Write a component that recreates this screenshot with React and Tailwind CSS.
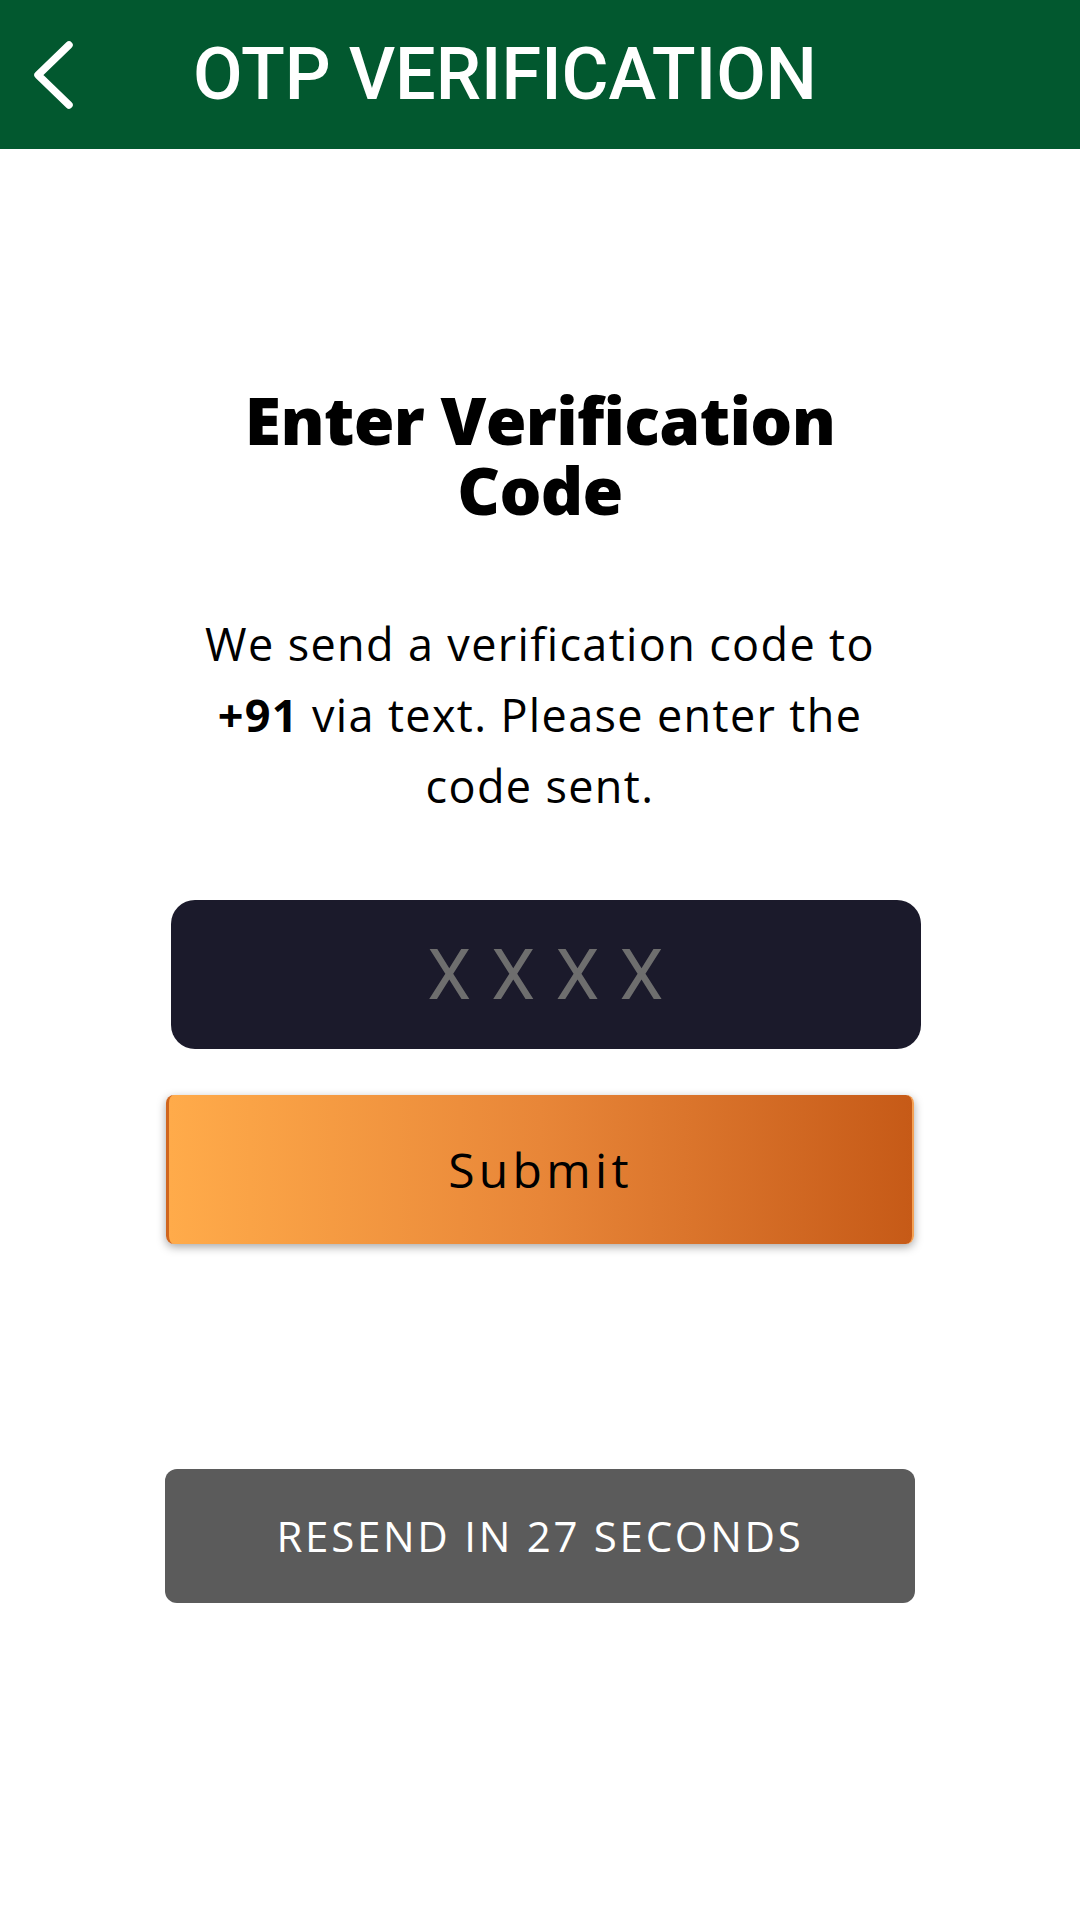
export default function App() {
  return (
    <div className="w-[1080px] h-[1920px] bg-white font-['Open_Sans',sans-serif]">
      {/* Header */}
      <header className="h-[149px] bg-[#02582F] flex items-center">
        <svg className="ml-[30px] w-[44px] h-[70px]" viewBox="0 0 44 70" fill="none">
          <polyline points="39,5 8,35 39,65" stroke="white" strokeWidth="7.5" strokeLinecap="round" strokeLinejoin="round" />
        </svg>
        <h1 className="ml-[119px] text-white font-['Roboto',sans-serif] font-medium text-[72px] leading-none">
          OTP VERIFICATION
        </h1>
      </header>

      <main className="flex flex-col items-center pt-[235px]">
        <h2 className="text-center text-black font-extrabold text-[66px] leading-[70px] tracking-[-0.01em]">
          Enter Verification<br />Code
        </h2>

        <p className="mt-[84px] text-center text-black text-[45px] leading-[71px] tracking-[0.03em]">
          We send a verification code to<br />
          <span className="font-bold">+91</span> via text. Please enter the<br />
          code sent.
        </p>

        <div className="mt-[79px] ml-[12px] w-[750px] h-[149px] rounded-[24px] bg-[#1B1A2B] flex items-center justify-center">
          <span className="font-['Roboto',sans-serif] font-normal text-[70px] leading-none text-[#6E6E6E] tracking-[0.02em]">
            X X X X
          </span>
        </div>

        <button className="mt-[46px] w-[748px] h-[149px] rounded-[8px] bg-linear-to-r from-[#FFAB4A] via-[#E88638] to-[#C65A17] border-l-[3px] border-l-[#D0661E] border-r-[2px] border-r-[#F5A255] shadow-[0_3px_10px_rgba(0,0,0,0.35)] flex items-center justify-center">
          <span className="text-black text-[48px] leading-none tracking-[0.09em]">Submit</span>
        </button>

        <button className="mt-[225px] w-[750px] h-[134px] rounded-[12px] bg-[#5B5B5B] flex items-center justify-center">
          <span className="text-white text-[42px] leading-none tracking-[0.065em]">RESEND IN 27 SECONDS</span>
        </button>
      </main>
    </div>
  );
}
